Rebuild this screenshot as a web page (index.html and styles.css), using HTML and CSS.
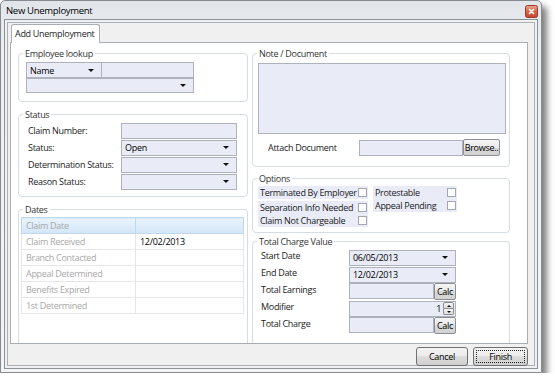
FILE: index.html
```html
<!DOCTYPE HTML>
<html lang="en">
  <head>
    <title>New Unemployment</title>
    <meta charset="utf-8">
    <link rel="stylesheet" href="styles.css">
  </head>
  <body>

  <div class="window">
    <div class="titlebar">
      <span class="title">New Unemployment</span>
      <span class="close">
        <svg width="13" height="13" viewBox="0 0 13 13">
          <defs>
            <linearGradient id="closeBg" x1="0" y1="0" x2="0" y2="1">
              <stop offset="0" stop-color="#eaa592"/>
              <stop offset="0.5" stop-color="#d7664d"/>
              <stop offset="1" stop-color="#c2452b"/>
            </linearGradient>
          </defs>
          <rect x="0.5" y="0.5" width="12" height="12" rx="2" fill="url(#closeBg)" stroke="#9b3b28"/>
          <path d="M4.5 4.5 L8.5 8.5 M8.5 4.5 L4.5 8.5" stroke="#fff" stroke-width="1.6" stroke-linecap="round"/>
        </svg>
      </span>
    </div>

    <div class="client">
      <div class="tabs">
        <span class="tab">Add Unemployment</span>
      </div>

      <div class="panel">
        <div class="col">
          <div class="group lookup">
            <div class="legend">Employee lookup</div>
            <div class="group-body">
              <div class="lookup-row">
                <div class="field combo name-combo">Name</div>
                <div class="field lookup-text"></div>
              </div>
              <div class="field combo lookup-combo"></div>
            </div>
          </div>

          <div class="group status">
            <div class="legend">Status</div>
            <div class="group-body">
              <div class="form-row">
                <span class="label">Claim Number:</span>
                <div class="field"></div>
              </div>
              <div class="form-row">
                <span class="label">Status:</span>
                <div class="field combo">Open</div>
              </div>
              <div class="form-row">
                <span class="label">Determination Status:</span>
                <div class="field combo"></div>
              </div>
              <div class="form-row">
                <span class="label">Reason Status:</span>
                <div class="field combo"></div>
              </div>
            </div>
          </div>

          <div class="group dates">
            <div class="legend">Dates</div>
            <div class="group-body">
              <table class="grid">
                <tr class="selected"><td>Claim Date</td><td></td></tr>
                <tr><td>Claim Received</td><td class="value">12/02/2013</td></tr>
                <tr><td>Branch Contacted</td><td></td></tr>
                <tr><td>Appeal Determined</td><td></td></tr>
                <tr><td>Benefits Expired</td><td></td></tr>
                <tr><td>1st Determined</td><td></td></tr>
              </table>
            </div>
          </div>
        </div>

        <div class="col">
          <div class="group note">
            <div class="legend">Note / Document</div>
            <div class="group-body">
              <div class="note-area"></div>
              <div class="attach-row">
                <span class="label">Attach Document</span>
                <div class="field"></div>
                <button class="btn-small browse">Browse..</button>
              </div>
            </div>
          </div>

          <div class="group options">
            <div class="legend">Options</div>
            <div class="group-body option-cols">
              <div class="check-col left">
                <div class="check-block">
                  <div class="check"><span>Terminated By Employer</span><span class="box"></span></div>
                </div>
                <div class="check-block">
                  <div class="check"><span>Separation Info Needed</span><span class="box"></span></div>
                  <div class="check"><span>Claim Not Chargeable</span><span class="box"></span></div>
                </div>
              </div>
              <div class="check-col right">
                <div class="check-block">
                  <div class="check"><span>Protestable</span><span class="box"></span></div>
                  <div class="check"><span>Appeal Pending</span><span class="box"></span></div>
                </div>
              </div>
            </div>
          </div>

          <div class="group charge">
            <div class="legend">Total Charge Value</div>
            <div class="group-body">
              <div class="form-row">
                <span class="label">Start Date</span>
                <div class="field combo">06/05/2013</div>
              </div>
              <div class="form-row">
                <span class="label">End Date</span>
                <div class="field combo">12/02/2013</div>
              </div>
              <div class="form-row">
                <span class="label">Total Earnings</span>
                <div class="calc-field">
                  <div class="field"></div>
                  <button class="btn-small">Calc</button>
                </div>
              </div>
              <div class="form-row">
                <span class="label">Modifier</span>
                <div class="field spin">
                  <span class="spin-value">1</span>
                  <span class="spin-buttons">
                    <span class="spin-up"></span>
                    <span class="spin-down"></span>
                  </span>
                </div>
              </div>
              <div class="form-row">
                <span class="label">Total Charge</span>
                <div class="calc-field">
                  <div class="field"></div>
                  <button class="btn-small">Calc</button>
                </div>
              </div>
            </div>
          </div>
        </div>
      </div>

      <div class="buttons">
        <button class="btn">Cancel</button>
        <button class="btn default">Finish</button>
      </div>
    </div>
  </div>

  </body>
</html>
```

FILE: styles.css
```css
html {
  height: 100%;
}
body {
  margin: 0;
  padding: 0;
  background: #ffffff;
  color: #1e1e1e;
  font-family: "Open Sans", "Noto Sans", sans-serif;
  font-size: 9px;
  letter-spacing: -0.3px;
}

button {
  font-family: inherit;
  font-size: 9px;
  letter-spacing: inherit;
  color: #000;
  cursor: pointer;
}

/* window frame */

.window {
  width: 542px;
  height: 373px;
  box-sizing: border-box;
  border: 1px solid #858a90;
  border-radius: 5px 5px 0 0;
  background: linear-gradient(#e1e5ea, #eceef1 40px, #f3f4f6);
  box-shadow: 5px 6px 6px rgba(0,0,0,0.5);
  display: flex;
  flex-direction: column;
}

.titlebar {
  height: 18px;
  display: flex;
  align-items: center;
  justify-content: space-between;
  padding: 0 3px 0 5px;
}

.title {
  font-size: 9.5px;
  color: #000;
}

.close {
  display: flex;
  margin-top: 3px;
}

.client {
  flex: 1;
  margin: 0 3px 3px;
  border: 1px solid #8d9299;
  box-shadow: inset 0 0 0 2px #eef0f2, inset 0 0 0 3px #aab0b7;
  background: #f0f0f0;
  padding: 4px 9px 2px 5px;
  display: flex;
  flex-direction: column;
}

/* tab */

.tabs {
  display: flex;
  padding-left: 1px;
}

.tab {
  height: 19px;
  box-sizing: border-box;
  border: 1px solid #a9aeb5;
  border-bottom: none;
  border-radius: 3px 3px 0 0;
  background: #ffffff;
  padding: 0 4px 0 3px;
  line-height: 18px;
  margin-bottom: -1px;
  position: relative;
  z-index: 1;
}

.panel {
  flex: 1;
  border: 1px solid #a9aeb5;
  background: #ffffff;
  padding: 10px 17px 0 7px;
  display: grid;
  grid-template-columns: 230px 258px;
  column-gap: 4px;
}

.col {
  display: flex;
  flex-direction: column;
}

/* group boxes */

.group {
  box-sizing: border-box;
  border: 1px solid #d6dce3;
  border-radius: 4px;
  background: #ffffff;
}

.legend {
  width: fit-content;
  margin: -7px 0 0 4px;
  padding: 0 2px;
  background: #ffffff;
  line-height: 13px;
  color: #333;
  white-space: nowrap;
}

.lookup {
  height: 49px;
}
.lookup .group-body {
  padding: 2px 7px 0;
}
.status {
  height: 83px;
  margin-top: 12px;
}
.status .group-body {
  padding: 1px 9px 0;
}
.dates {
  flex: 1;
  margin-top: 12px;
  border-bottom: none;
  border-radius: 4px 4px 0 0;
}
.dates .group-body {
  padding: 1px 2px 0;
}
.note {
  height: 114px;
}
.note .group-body {
  padding: 3px 3px 0 5px;
}
.options {
  height: 55px;
  margin-top: 11px;
}
.charge {
  flex: 1;
  margin-top: 8px;
  border-bottom: none;
  border-radius: 4px 4px 0 0;
}
.charge .group-body {
  padding: 1px 0 0 8px;
}

/* inputs */

.field {
  box-sizing: border-box;
  height: 16px;
  border: 1px solid #adb2be;
  background: #e9ecf7;
  padding: 0 3px;
  display: flex;
  align-items: center;
  color: #000;
}

.combo::after {
  content: "";
  margin-left: auto;
  margin-right: 4px;
  border-top: 3px solid #111;
  border-left: 3px solid transparent;
  border-right: 3px solid transparent;
}

.lookup-row {
  display: flex;
}
.name-combo {
  width: 75px;
  border-right: none;
}
.lookup-text {
  width: 93px;
}
.lookup-combo {
  width: 168px;
  height: 15px;
}

.form-row {
  display: grid;
  grid-template-columns: 93px 116px;
  align-items: center;
  height: 17px;
}
.label {
  color: #222;
  white-space: nowrap;
}

.charge .form-row {
  grid-template-columns: 88px 107px;
}
.charge .label {
  align-self: start;
  line-height: 14px;
}

/* dates grid */

.grid {
  width: 223px;
  border-collapse: collapse;
}
.grid td {
  height: 15px;
  padding: 0 0 0 4px;
  border: 1px solid #e6e6e6;
  color: #a8a8a8;
  white-space: nowrap;
}
.grid td:first-child {
  width: 109px;
}
.grid td.value {
  color: #000;
}
.grid tr.selected td {
  background: linear-gradient(#eaf3fc, #d2e6f7);
  border-color: #bdd8ef;
}

/* note */

.note-area {
  height: 71px;
  box-sizing: border-box;
  border: 1px solid #adb2be;
  background: #e9ecf7;
}

.attach-row {
  display: grid;
  grid-template-columns: 91px 104px 37px;
  align-items: center;
  margin: 5px 0 0 10px;
}

.btn-small {
  height: 17px;
  box-sizing: border-box;
  padding: 0;
  border: 1px solid #8b8e93;
  border-radius: 2px;
  background: linear-gradient(#f6f6f6, #e8e8e8 50%, #d9d9d9 50%, #d2d2d2);
}

/* options */

.option-cols {
  display: flex;
  gap: 5px;
  padding: 1px 0 0 5px;
}
.check-col {
  display: flex;
  flex-direction: column;
  gap: 2px;
}
.check-col.left {
  width: 110px;
}
.check-col.right {
  width: 84px;
}
.check-block {
  background: #e9ecf7;
}
.check {
  height: 13px;
  display: flex;
  align-items: center;
  justify-content: space-between;
  padding-left: 2px;
  color: #222;
  white-space: nowrap;
}
.box {
  width: 9px;
  height: 9px;
  flex: none;
  box-sizing: border-box;
  border: 1px solid #a3a7ae;
  background: #ffffff;
  margin-right: 1px;
}

/* charge value */

.calc-field {
  display: flex;
}
.calc-field .field {
  flex: 1;
}
.calc-field .btn-small {
  width: 22px;
}

.spin {
  padding-right: 1px;
}
.spin-value {
  margin-left: auto;
  margin-right: 2px;
}
.spin-buttons {
  display: flex;
  flex-direction: column;
  width: 11px;
  height: 13px;
}
.spin-up, .spin-down {
  flex: 1;
  box-sizing: border-box;
  border: 1px solid #8b8e93;
  background: linear-gradient(#f6f6f6, #dcdcdc);
  display: flex;
  align-items: center;
  justify-content: center;
}
.spin-up {
  border-radius: 2px 2px 0 0;
}
.spin-down {
  border-top: none;
  border-radius: 0 0 2px 2px;
}
.spin-up::after {
  content: "";
  border-bottom: 2px solid #111;
  border-left: 2px solid transparent;
  border-right: 2px solid transparent;
}
.spin-down::after {
  content: "";
  border-top: 2px solid #111;
  border-left: 2px solid transparent;
  border-right: 2px solid transparent;
}

/* dialog buttons */

.buttons {
  display: flex;
  justify-content: flex-end;
  gap: 5px;
  margin-top: 3px;
}

.btn {
  width: 52px;
  height: 19px;
  padding: 0;
  border: 1px solid #707070;
  border-radius: 3px;
  background: linear-gradient(#f3f3f3, #ebebeb 50%, #dddddd 50%, #cfcfcf);
}

.btn.default {
  width: 55px;
  outline: 1px dotted #222;
  outline-offset: -4px;
}
```
